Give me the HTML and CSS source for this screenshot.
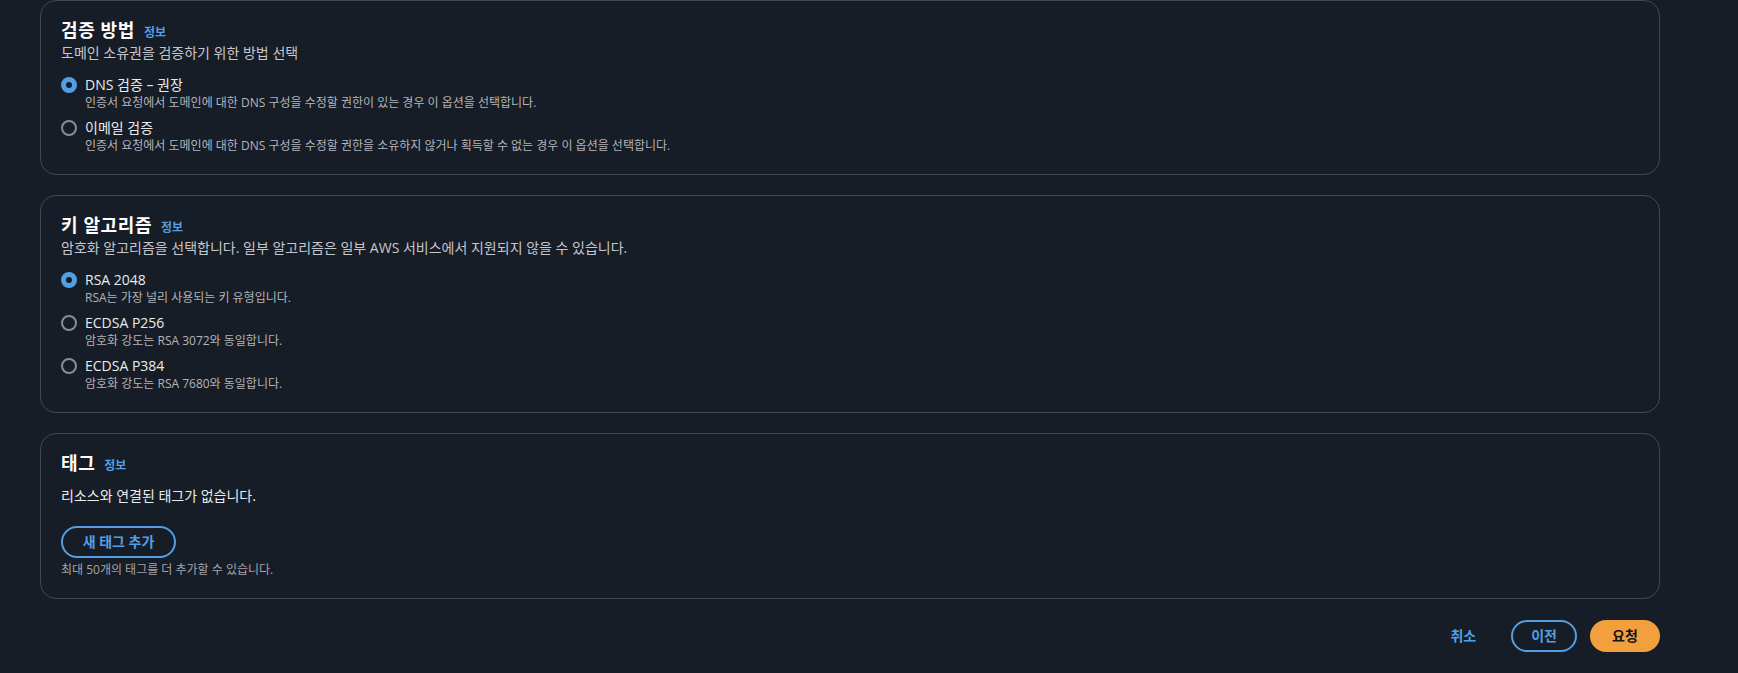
FILE: index.html
```html
<!DOCTYPE html>
<html lang="ko">
<head>
<meta charset="utf-8">
<title>인증서 요청</title>
<link rel="stylesheet" href="styles.css">
</head>
<body>
<main class="page">
  <section class="card">
    <div class="card-head">
      <h2 class="card-title">검증 방법<a class="info" href="#">정보</a></h2>
      <p class="card-desc">도메인 소유권을 검증하기 위한 방법 선택</p>
    </div>
    <div class="radio-group">
      <div class="radio">
        <span class="dot on"></span>
        <div class="radio-text">
          <span class="radio-label">DNS 검증 – 권장</span>
          <span class="radio-desc">인증서 요청에서 도메인에 대한 DNS 구성을 수정할 권한이 있는 경우 이 옵션을 선택합니다.</span>
        </div>
      </div>
      <div class="radio">
        <span class="dot"></span>
        <div class="radio-text">
          <span class="radio-label">이메일 검증</span>
          <span class="radio-desc">인증서 요청에서 도메인에 대한 DNS 구성을 수정할 권한을 소유하지 않거나 획득할 수 없는 경우 이 옵션을 선택합니다.</span>
        </div>
      </div>
    </div>
  </section>

  <section class="card">
    <div class="card-head">
      <h2 class="card-title">키 알고리즘<a class="info" href="#">정보</a></h2>
      <p class="card-desc">암호화 알고리즘을 선택합니다. 일부 알고리즘은 일부 AWS 서비스에서 지원되지 않을 수 있습니다.</p>
    </div>
    <div class="radio-group">
      <div class="radio">
        <span class="dot on"></span>
        <div class="radio-text">
          <span class="radio-label">RSA 2048</span>
          <span class="radio-desc">RSA는 가장 널리 사용되는 키 유형입니다.</span>
        </div>
      </div>
      <div class="radio">
        <span class="dot"></span>
        <div class="radio-text">
          <span class="radio-label">ECDSA P256</span>
          <span class="radio-desc">암호화 강도는 RSA 3072와 동일합니다.</span>
        </div>
      </div>
      <div class="radio">
        <span class="dot"></span>
        <div class="radio-text">
          <span class="radio-label">ECDSA P384</span>
          <span class="radio-desc">암호화 강도는 RSA 7680와 동일합니다.</span>
        </div>
      </div>
    </div>
  </section>

  <section class="card">
    <div class="card-head">
      <h2 class="card-title">태그<a class="info" href="#">정보</a></h2>
    </div>
    <p class="empty">리소스와 연결된 태그가 없습니다.</p>
    <button class="btn btn-normal btn-add" type="button">새 태그 추가</button>
    <p class="hint">최대 50개의 태그를 더 추가할 수 있습니다.</p>
  </section>

  <div class="actions">
    <button class="btn btn-link" type="button">취소</button>
    <button class="btn btn-normal" type="button">이전</button>
    <button class="btn btn-primary" type="button">요청</button>
  </div>
</main>
</body>
</html>
```

FILE: styles.css
```css
* {
  box-sizing: border-box;
}

html, body {
  margin: 0;
  padding: 0;
  background: #161d26;
}

body {
  font-family: "Open Sans", "Noto Sans CJK KR", sans-serif;
  color: #e9ebed;
  font-size: 14px;
  line-height: 20px;
}

.page {
  width: 1738px;
  height: 673px;
  padding: 0 78px 0 40px;
  display: flex;
  flex-direction: column;
  gap: 20px;
  overflow: hidden;
}

.card {
  border: 1px solid #424650;
  border-radius: 16px;
  padding: 18px 20px 20px 20px;
  display: flex;
  flex-direction: column;
  align-items: flex-start;
}

.card-head {
  display: flex;
  flex-direction: column;
  gap: 2px;
}

.card-title {
  margin: 0;
  font-size: 18px;
  line-height: 22px;
  font-weight: 700;
  color: #ffffff;
  letter-spacing: 0.6px;
  display: flex;
  align-items: baseline;
  gap: 9px;
}

.info {
  font-size: 12px;
  line-height: 16px;
  font-weight: 700;
  color: #539fe5;
  text-decoration: none;
  letter-spacing: 0;
}

.card-desc {
  margin: 0;
  color: #c6c6cd;
  font-size: 14px;
  line-height: 20px;
}

.radio-group {
  margin-top: 12px;
  display: flex;
  flex-direction: column;
  gap: 7px;
}

.radio {
  display: flex;
  align-items: flex-start;
  gap: 8px;
}

.dot {
  flex: none;
  width: 16px;
  height: 16px;
  margin-top: 2px;
  border-radius: 50%;
  border: 2px solid #8c8c94;
}

.dot.on {
  border: 5px solid #539fe5;
  background: #161d26;
}

.radio-text {
  display: flex;
  flex-direction: column;
}

.radio-label {
  font-size: 14px;
  line-height: 20px;
  color: #e9ebed;
}

.radio-desc {
  font-size: 12px;
  line-height: 16px;
  color: #b4b4bb;
}

.empty {
  margin: 12px 0 0 0;
  color: #e9ebed;
  font-size: 14px;
  line-height: 20px;
}

.hint {
  margin: 4px 0 0 0;
  font-size: 12px;
  line-height: 16px;
  color: #a4a4ad;
}

.btn {
  font-family: "Open Sans", "Noto Sans CJK KR", sans-serif;
  font-size: 14px;
  line-height: 20px;
  font-weight: 700;
  height: 32px;
  border-radius: 20px;
  padding: 4px 18px;
  border: 2px solid transparent;
  background: transparent;
  cursor: pointer;
}

.btn-normal {
  border-color: #539fe5;
  color: #539fe5;
}

.btn-add {
  margin-top: 20px;
  width: 115px;
  padding: 4px 0;
}

.btn-link {
  color: #539fe5;
  padding: 4px 20px;
}

.btn-primary {
  background: #f2a03d;
  border-color: #f2a03d;
  color: #0f141a;
  width: 70px;
  padding: 4px 0;
}

.actions {
  margin-top: 1px;
  display: flex;
  justify-content: flex-end;
  gap: 13px;
}
```
